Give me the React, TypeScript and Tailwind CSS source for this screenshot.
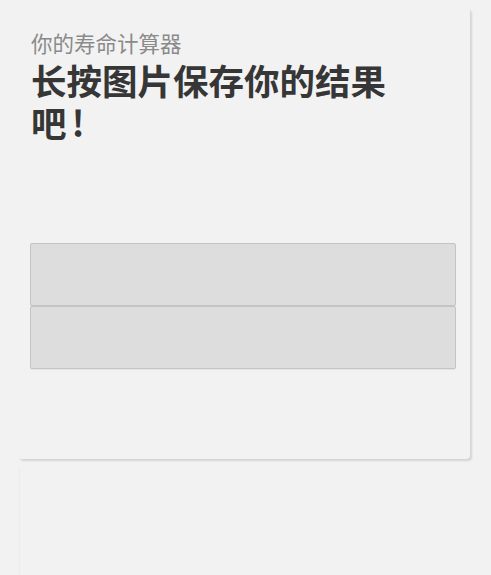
export default function App() {
  return (
    <div
      className="min-h-screen bg-[#f2f2f2] pl-[18px] pr-[21px] pt-2"
      style={{ fontFamily: '"Noto Sans CJK SC", "Noto Sans", sans-serif' }}
    >
      <section className="h-[451px] rounded-[4px] bg-[#f2f2f2] pl-[13px] pr-[14px] pt-[22px] shadow-[2px_2px_2px_rgba(0,0,0,0.12)]">
        <p className="text-[21.5px] leading-[26px] text-[#8a8a8a]">你的寿命计算器</p>
        <h1 className="mt-[3px] max-w-[375px] text-[35.5px] font-bold leading-[42px] text-[#363636]">
          长按图片保存你的结果吧<span className="ml-[5px]">!</span>
        </h1>
        <div className="mt-[100px] ml-[-1px] flex flex-col">
          <div className="h-[63px] rounded-[2px] border border-[#c4c4c4] bg-[#dddddd] shadow-[0_1px_1px_rgba(0,0,0,0.06)]" />
          <div className="h-[63px] rounded-[2px] border border-[#c4c4c4] bg-[#dddddd] shadow-[0_1px_1px_rgba(0,0,0,0.06)]" />
        </div>
      </section>
      <section className="mt-[9px] ml-[2px] h-[120px] bg-[#f2f2f2] shadow-[-1px_0_1px_rgba(0,0,0,0.025)]" />
    </div>
  );
}
